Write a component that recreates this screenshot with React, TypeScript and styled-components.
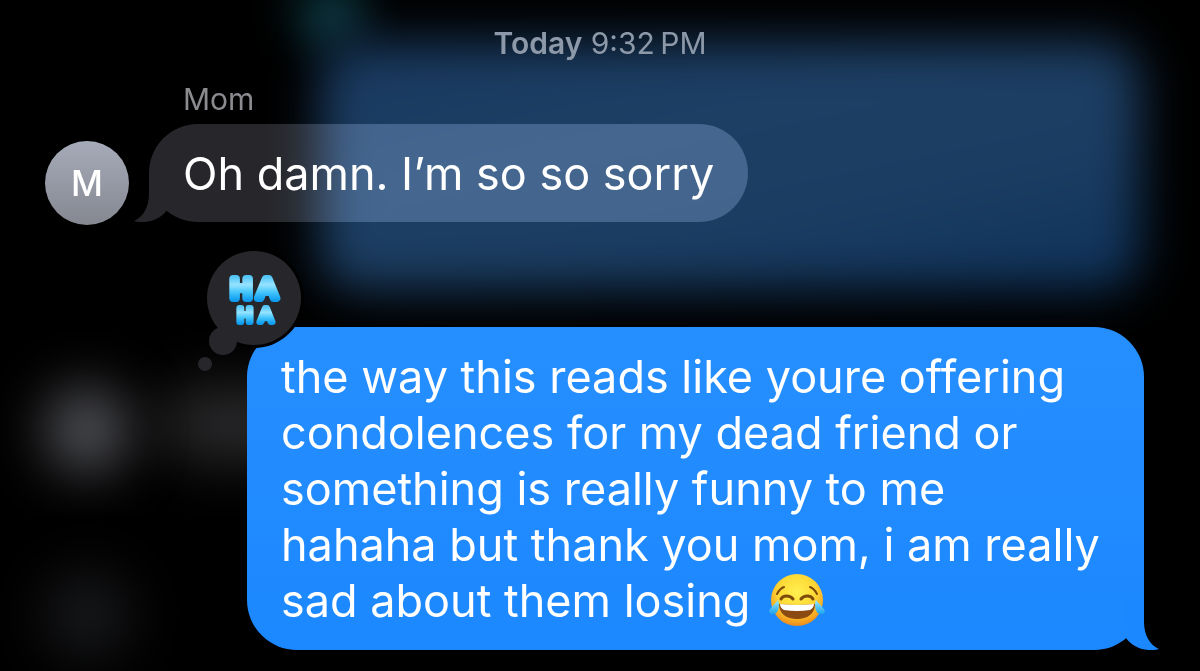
import React from "react";
import styled, { createGlobalStyle } from "styled-components";

const GlobalStyle = createGlobalStyle`
  * { box-sizing: border-box; }
  body {
    margin: 0;
    background: #000;
    font-family: Inter, "Liberation Sans", sans-serif;
    -webkit-font-smoothing: antialiased;
  }
`;

const Page = styled.main`
  position: relative;
  isolation: isolate;
  overflow: hidden;
  min-height: 100vh;
  padding: 25px 56px 21px 45px;
  background: #000;
`;

const Backdrop = styled.div`
  position: absolute;
  inset: 0;
  overflow: hidden;
  pointer-events: none;
`;

const BluePane = styled.div`
  position: absolute;
  top: 42px;
  left: 320px;
  right: 60px;
  height: 248px;
  border-radius: 36px;
  background: linear-gradient(168deg, #18385e 0%, #1d3f64 35%, #1b3d62 65%, #0d3159 100%);
  filter: blur(24px);
`;

const Glow = styled.div<{ $x: number; $y: number; $w: number; $h: number; $color: string; $blur: number }>`
  position: absolute;
  left: ${(p) => p.$x}px;
  top: ${(p) => p.$y}px;
  width: ${(p) => p.$w}px;
  height: ${(p) => p.$h}px;
  border-radius: 48px;
  background: ${(p) => p.$color};
  filter: blur(${(p) => p.$blur}px);
`;

const Timestamp = styled.h1`
  position: relative;
  margin: 0 0 22px;
  padding-left: 11px;
  text-align: center;
  font-size: 30px;
  line-height: 36px;
  font-weight: 400;
  color: #8d99a9;

  strong { font-weight: 600; }
`;

const Thread = styled.div`
  display: flex;
  flex-direction: column;
  gap: 105px;
`;

const IncomingRow = styled.article`
  display: grid;
  grid-template-columns: 84px auto;
  column-gap: 20px;
  justify-content: start;
`;

const Sender = styled.h2`
  position: relative;
  grid-column: 2;
  margin: 0 0 9px;
  padding-left: 34px;
  font-size: 30px;
  line-height: 32px;
  font-weight: 400;
  color: #8b8b90;
`;

const Avatar = styled.div`
  display: flex;
  align-items: center;
  justify-content: center;
  align-self: end;
  width: 84px;
  height: 84px;
  margin-bottom: -3px;
  border-radius: 50%;
  background: linear-gradient(#a6abb9, #858891);
  color: #fff;
  font-size: 35px;
  font-weight: 500;
`;

const Bubble = styled.div`
  position: relative;
  min-width: 0;
  padding: 22px 34px 20px;
`;

const Shape = styled.div<{ $mine?: boolean }>`
  position: absolute;
  inset: 0;
  border-radius: 50px;
  background: ${(p) => (p.$mine ? "linear-gradient(#268fff, #1c88ff)" : "#27272b")};
  mix-blend-mode: ${(p) => (p.$mine ? "normal" : "plus-lighter")};
  color: ${(p) => (p.$mine ? "#1c88ff" : "#27272b")};
`;

const TailSvg = styled.svg<{ $mine?: boolean }>`
  position: absolute;
  bottom: 0;
  ${(p) => (p.$mine ? "right: -15px;" : "left: -15px; transform: scaleX(-1);")}
  width: 33px;
  height: 50px;
  fill: currentColor;
`;

const Message = styled.p`
  position: relative;
  margin: 0;
  font-size: 45px;
  line-height: 56px;
  color: #fff;
`;

const OutgoingRow = styled.article`
  padding-left: 202px;
`;

const OutgoingBubble = styled(Bubble)`
  padding: 22px 34px 21px;
`;

const Reaction = styled.svg`
  position: absolute;
  top: -82px;
  left: -54px;
  width: 116px;
  height: 132px;
`;

const EmojiSvg = styled.svg`
  width: 56px;
  height: 56px;
  margin: -4px 0 -4px 6px;
  vertical-align: -7px;
`;

function Tail({ mine }: { mine?: boolean }) {
  return (
    <TailSvg $mine={mine} viewBox="0 0 33 50" aria-hidden="true">
      <path d="M18 0V22C18 35 24 45 33 49C22 52 8 49 0 38V0Z" />
    </TailSvg>
  );
}

function HahaReaction() {
  const letters = {
    fontFamily: '"Liberation Sans", Arial, sans-serif',
    fontWeight: 400,
    fill: "url(#haha)",
    stroke: "url(#haha)",
    strokeLinejoin: "round" as const,
    textAnchor: "middle" as const,
  };
  return (
    <Reaction viewBox="0 0 116 132" role="img" aria-label="Haha reaction">
      <defs>
        <linearGradient id="haha" x1="0" y1="0" x2="0" y2="1">
          <stop offset="0.1" stopColor="#4fc4f7" />
          <stop offset="0.38" stopColor="#96e3ff" />
          <stop offset="0.62" stopColor="#45c6fb" />
          <stop offset="0.88" stopColor="#109df0" />
        </linearGradient>
      </defs>
      <circle cx="61" cy="53" r="50" fill="#000" />
      <circle cx="61" cy="53" r="47" fill="#27272b" />
      <circle cx="30" cy="96" r="14" fill="#27272b" />
      <circle cx="12" cy="119" r="7" fill="#27272b" />
      <text x="48 74" y="53" fontSize="28" strokeWidth="8" {...letters}>HA</text>
      <text x="52 73" y="77" fontSize="20" strokeWidth="6" {...letters}>HA</text>
    </Reaction>
  );
}

function JoyEmoji() {
  return (
    <EmojiSvg viewBox="0 0 56 56" role="img" aria-label="face with tears of joy">
      <defs>
        <radialGradient id="face" cx="0.5" cy="0.35" r="0.65">
          <stop offset="0" stopColor="#fff04f" />
          <stop offset="0.55" stopColor="#fdd835" />
          <stop offset="0.85" stopColor="#f7a823" />
          <stop offset="1" stopColor="#e98a1c" />
        </radialGradient>
        <linearGradient id="tear" x1="0" y1="0" x2="0" y2="1">
          <stop offset="0" stopColor="#9be9fb" />
          <stop offset="1" stopColor="#1ba3ee" />
        </linearGradient>
      </defs>
      <circle cx="28" cy="28" r="26" fill="url(#face)" />
      <g fill="none" stroke="#7d4a0c" strokeLinecap="round">
        <path d="M8 22C10 18 12 16 15 15" strokeWidth="2" />
        <path d="M48 22C46 18 44 16 41 15" strokeWidth="2" />
        <path d="M12 27C14 23 21 23 24 27" strokeWidth="3" />
        <path d="M32 27C35 23 42 23 44 27" strokeWidth="3" />
      </g>
      <path d="M10 32Q28 34 46 32C46 42 38 47 28 47S10 42 10 32Z" fill="#8a4a12" />
      <path d="M11 32Q28 34 45 32C45 35 43 37 41 38Q28 40 15 38C13 37 11 35 11 32Z" fill="#fff" />
      <path d="M9 28C11 32 10 41 5 42C0 43 -1 39 2 36C4 33 7 31 9 28Z" fill="url(#tear)" />
      <path d="M47 28C45 32 46 41 51 42C56 43 57 39 54 36C52 33 49 31 47 28Z" fill="url(#tear)" />
    </EmojiSvg>
  );
}

export default function App() {
  return (
    <>
      <GlobalStyle />
      <Page>
        <Backdrop aria-hidden="true">
          <Glow $x={296} $y={-20} $w={70} $h={70} $color="#0d3740" $blur={22} />
          <BluePane />
          <Glow $x={160} $y={388} $w={300} $h={72} $color="#2a2a2c" $blur={28} />
          <Glow $x={46} $y={389} $w={82} $h={82} $color="#58595f" $blur={28} />
          <Glow $x={46} $y={574} $w={82} $h={82} $color="#1b1c1f" $blur={28} />
        </Backdrop>

        <Timestamp>
          <strong>Today</strong> 9:32&#8201;PM
        </Timestamp>

        <Thread>
          <IncomingRow>
            <Sender>Mom</Sender>
            <Avatar aria-hidden="true">M</Avatar>
            <Bubble>
              <Shape>
                <Tail />
              </Shape>
              <Message>Oh damn. I’m so so sorry</Message>
            </Bubble>
          </IncomingRow>

          <OutgoingRow>
            <OutgoingBubble>
              <Shape $mine>
                <Tail mine />
              </Shape>
              <Message>
                the way this reads like youre offering condolences for my dead friend or something is
                really funny to me
                <br />
                hahaha but thank you mom, i am really sad about them losing <JoyEmoji />
              </Message>
              <HahaReaction />
            </OutgoingBubble>
          </OutgoingRow>
        </Thread>
      </Page>
    </>
  );
}
